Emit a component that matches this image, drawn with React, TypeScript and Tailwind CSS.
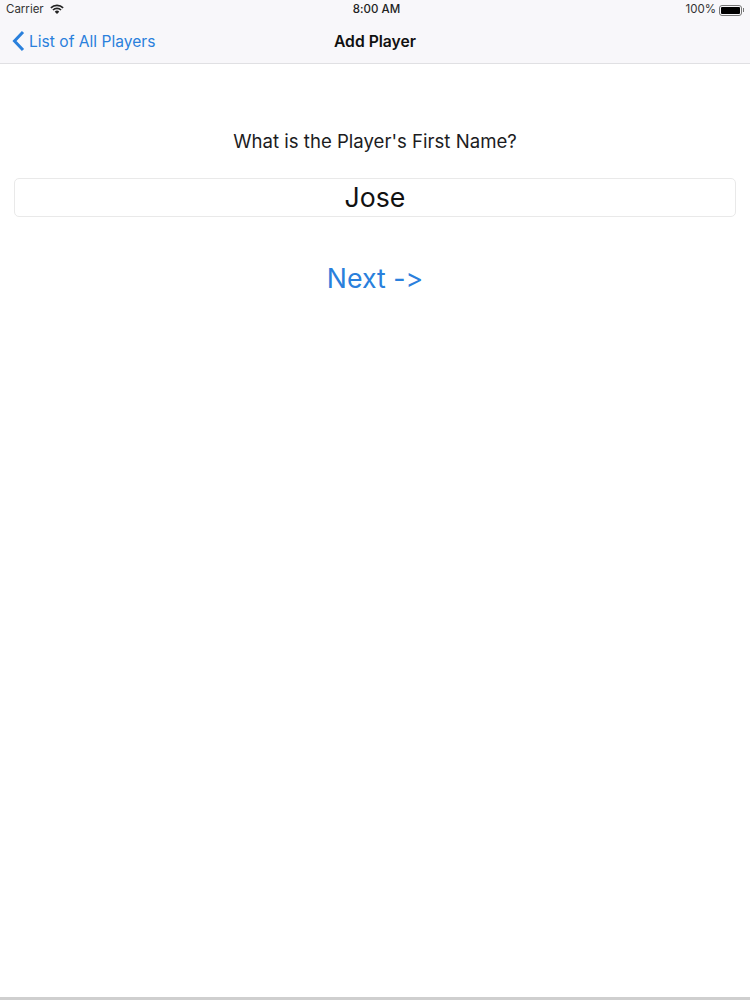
const font = "[font-family:Inter,'Liberation_Sans',sans-serif] [font-feature-settings:'calt'_0,'liga'_0]"

function Wifi() {
  return (
    <svg width="14" height="11" viewBox="0 0 16 12" className="ml-[6px] mb-[2px]">
      <path d="M1 4.2a10 10 0 0 1 14 0" fill="none" stroke="#222" strokeWidth="1.9" />
      <path d="M3.4 6.6a6.6 6.6 0 0 1 9.2 0" fill="none" stroke="#222" strokeWidth="1.9" />
      <path d="M5.400 8.500a3.600 3.600 0 0 1 5.200 0L8 11.200z" fill="#222" />
    </svg>
  )
}

function Battery() {
  return (
    <div className="ml-[3px] flex items-center">
      <div className="h-[11px] w-[23px] rounded-[3px] border border-[#777] p-[1px]">
        <div className="h-full w-full rounded-[1px] bg-black" />
      </div>
      <div className="ml-[1px] h-[4px] w-[1px] bg-[#777]" />
    </div>
  )
}

export default function App() {
  return (
    <div className={`${font} flex h-[1000px] w-[750px] flex-col bg-white`}>
      <div className="h-[64px] shrink-0 border-b border-[#e0e0e3] bg-[#f8f7fa]">
        <div className="flex h-[20px] items-center justify-between pl-[6px] pr-[6px] text-[11.5px] text-[#333]">
          <div className="flex w-[200px] items-center">
            Carrier
            <Wifi />
          </div>
          <div className="pl-[3px] font-medium text-[#222]">8:00 AM</div>
          <div className="flex w-[200px] items-center justify-end">
            100%
            <Battery />
          </div>
        </div>
        <div className="flex h-[43px] items-center justify-between pl-[12px]">
          <div className="flex w-[200px] items-center text-[15.6px] text-[#2a80dc]">
            <svg width="13" height="22" viewBox="0 0 13 22" className="mr-[4px]">
              <path d="M11 2 2.500 11l8.500 9" fill="none" stroke="#2a80dc" strokeWidth="3" />
            </svg>
            List of All Players
          </div>
          <div className="text-[15.7px] font-semibold text-[#111]">Add Player</div>
          <div className="w-[212px]" />
        </div>
      </div>

      <main className="flex flex-1 flex-col items-center">
        <p className="mt-[63px] text-[18.6px] leading-[28px] text-[#1c1c1e]">What is the Player's First Name?</p>
        <div className="mt-[23px] flex h-[39px] w-[722px] items-center justify-center rounded-[5px] border border-[#e9e9e9] text-[26.7px] text-[#111]">
          Jose
        </div>
        <div className="mt-[41px] text-[26.7px] leading-[40px] text-[#2a80dc]">Next -&gt;</div>
      </main>

      <div className="h-[3px] shrink-0 bg-[#cfcfcf]" />
    </div>
  )
}
